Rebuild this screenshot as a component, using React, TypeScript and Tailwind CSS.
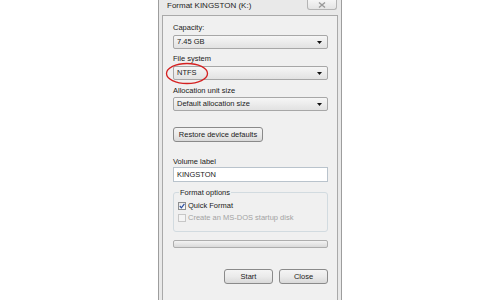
import React from "react";

const font = "font-['Liberation_Sans',Arial,sans-serif]";

function Combo({ value }: { value: string }) {
  return (
    <div className="w-[155px] h-[14px] rounded-[2px] border border-[#a7a7a7] bg-gradient-to-b from-[#f6f6f6] to-[#e2e2e2] flex items-center justify-between pl-[3px] pr-[5px]">
      <span className="text-[7.5px] leading-none text-[#1b1b1b]">{value}</span>
      <svg width="5" height="3" viewBox="0 0 5 3">
        <path d="M0 0 H5 L2.5 3 Z" fill="#111" />
      </svg>
    </div>
  );
}

function Button({ label, w }: { label: string; w: string }) {
  return (
    <div
      className={`${w} h-[15px] rounded-[3px] border border-[#8a8a8a] bg-gradient-to-b from-[#f4f4f4] via-[#ebebeb] to-[#d9d9d9] flex items-center justify-center text-[7.5px] leading-none text-[#1b1b1b]`}
    >
      {label}
    </div>
  );
}

export default function App() {
  return (
    <div className={`w-[500px] h-[300px] bg-white overflow-hidden ${font}`}>
      <div className="relative ml-[158px] w-[184px] h-[320px] border-x border-[#9d9d9d] bg-[#e9e9e9] px-[3px] flex flex-col">
        {/* Title bar */}
        <div className="h-[15px] flex items-start justify-between">
          <span className="mt-[1px] ml-[5px] text-[8px] leading-[10px] text-[#1e1e1e]">
            Format KINGSTON (K:)
          </span>
          <div className="w-[30px] h-[10px] mr-[1px] rounded-b-[3px] border border-t-0 border-[#b4b4b4] bg-gradient-to-b from-[#f5f5f5] to-[#e4e4e4] flex items-center justify-center">
            <svg width="8" height="6" viewBox="0 0 8 6">
              <path d="M1 0.5 L7 5.5 M7 0.5 L1 5.5" stroke="#9a9a9a" strokeWidth="1.4" />
            </svg>
          </div>
        </div>

        {/* Client area */}
        <div className="flex-1 border border-[#a9a9a9] bg-[#f0f0f0] pl-[10px] pt-[7px] flex flex-col text-[7.5px] leading-[9px] text-[#1b1b1b]">
          <span className="h-[9px]">Capacity:</span>
          <div className="mt-[3px]">
            <Combo value="7.45 GB" />
          </div>
          <span className="mt-[5px] h-[9px]">File system</span>
          <div className="mt-[3px]">
            <Combo value="NTFS" />
          </div>
          <span className="mt-[6px] h-[9px]">Allocation unit size</span>
          <div className="mt-[2px]">
            <Combo value="Default allocation size" />
          </div>
          <div className="mt-[16px]">
            <Button label="Restore device defaults" w="w-[90px]" />
          </div>
          <span className="mt-[15px] h-[9px]">Volume label</span>
          <div className="mt-[1px] w-[155px] h-[15px] border border-[#b9c3cc] bg-white flex items-center pl-[3px]">
            KINGSTON
          </div>

          <fieldset className="mt-[6px] w-[155px] h-[44px] border border-[#d2dbe0] rounded-[3px] px-[4px] pb-[3px]">
            <legend className="px-[1px] ml-[1px] leading-[9px]">Format options</legend>
            <div className="flex items-center gap-[2px] mt-[4px]">
              <div className="w-[8px] h-[8px] border border-[#8e8f8f] bg-gradient-to-br from-[#e4e4e4] to-white flex items-center justify-center">
                <svg width="6" height="6" viewBox="0 0 6 6">
                  <path d="M0.8 3 L2.4 4.8 L5.4 0.8" stroke="#2b4ea0" strokeWidth="1.2" fill="none" />
                </svg>
              </div>
              <span>Quick Format</span>
            </div>
            <div className="flex items-center gap-[2px] mt-[3px] text-[#a3a3a3]">
              <div className="w-[8px] h-[8px] border border-[#c7c7c7] bg-[#f4f4f4]" />
              <span>Create an MS-DOS startup disk</span>
            </div>
          </fieldset>

          <div className="mt-[8px] w-[155px] h-[8px] rounded-[2px] border border-[#adadad] bg-gradient-to-b from-[#f3f3f3] to-[#dadada]" />

          <div className="mt-[21px] w-[155px] flex justify-end gap-[6px]">
            <Button label="Start" w="w-[49px]" />
            <Button label="Close" w="w-[49px]" />
          </div>
        </div>

        {/* annotation around file system value */}
        <svg className="absolute left-[6px] top-[62px]" width="44" height="23" viewBox="0 0 44 23">
          <ellipse cx="22" cy="11.5" rx="20.5" ry="10" fill="none" stroke="#d42020" strokeWidth="1.3" />
        </svg>
      </div>
    </div>
  );
}
